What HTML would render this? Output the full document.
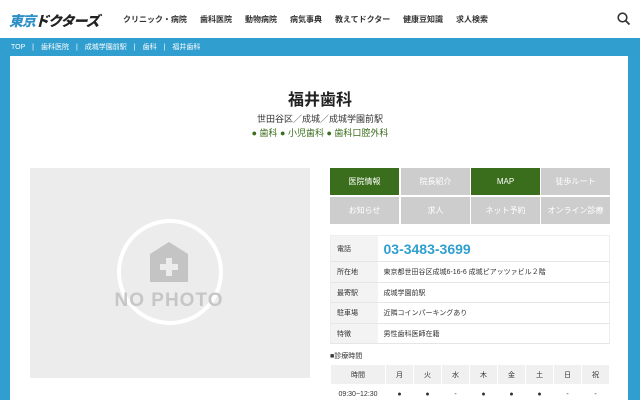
<!DOCTYPE html><html><head><meta charset="utf-8"><style>
*{margin:0;padding:0;box-sizing:border-box}
body{width:640px;height:400px;overflow:hidden;background:#fff;font-family:"Liberation Sans","Noto Sans CJK JP",sans-serif;position:relative;color:#333}
.a{position:absolute}
.nav span{position:absolute;top:14px;font-size:8px;font-weight:bold;color:#333}
.blue{left:0;top:38px;width:640px;height:362px;background:#309fcf}
.bc{top:42px;left:11px;font-size:7px;color:#fff}
.main{left:10px;top:56px;width:618px;height:344px;background:#fff}
.btn{position:absolute;width:69px;height:27px;font-size:8px;color:#fff;text-align:center;line-height:27px;background:#cdcdcd}
.g{background:#3b6e1c}
table{border-collapse:collapse;font-size:7px}
.info td{border-bottom:1px solid #e6e6e6;padding-left:6px}
.info td.l{background:#f3f3f3;width:47px}
.hr td{text-align:center;border:1px solid #fff;height:20px}
</style></head><body>
<div class="a" style="left:9px;top:11px;font-size:14px;font-weight:900;font-style:italic;letter-spacing:-1px"><span style="color:#2f8fc7">東京</span><span style="color:#222">ドクターズ</span></div>
<div class="nav"><span style="left:123px">クリニック・病院</span><span style="left:200px">歯科医院</span><span style="left:245px">動物病院</span><span style="left:290px">病気事典</span><span style="left:335px">教えてドクター</span><span style="left:403px">健康豆知識</span><span style="left:456px">求人検索</span></div>
<svg class="a" style="left:617px;top:12px" width="14" height="14"><circle cx="5.5" cy="5.5" r="4.3" fill="none" stroke="#333" stroke-width="1.6"/><line x1="8.7" y1="8.7" x2="12.5" y2="12.5" stroke="#333" stroke-width="1.8"/></svg>
<div class="a blue"></div>
<div class="a bc">TOP　|　歯科医院　|　成城学園前駅　|　歯科　|　福井歯科</div>
<div class="a main"></div>
<div class="a" style="left:0;width:640px;top:86px;text-align:center;font-size:16px;font-weight:bold;color:#222">福井歯科</div>
<div class="a" style="left:0;width:640px;top:112px;text-align:center;font-size:9px;color:#333">世田谷区／成城／成城学園前駅</div>
<div class="a" style="left:0;width:640px;top:126px;text-align:center;font-size:9px;color:#3b6e1c">● 歯科 ● 小児歯科 ● 歯科口腔外科</div>
<div class="a" style="left:30px;top:168px;width:280px;height:210px;background:#ececec"></div>
<svg class="a" style="left:30px;top:168px" width="280" height="210"><circle cx="140" cy="104" r="51" fill="none" stroke="#fff" stroke-width="4"/><path d="M120 103V86L139 74L158 86V114H120Z" fill="#c4c4c4"/><path d="M136 90h6v6h6v6h-6v6h-6v-6h-6v-6h6z" fill="#ececec"/><text x="139" y="138" text-anchor="middle" font-size="19" font-weight="bold" fill="#c6c6c6" font-family="Liberation Sans" letter-spacing="1">NO PHOTO</text></svg>
<div class="btn g" style="left:330px;top:168px">医院情報</div><div class="btn" style="left:401px;top:168px">院長紹介</div><div class="btn g" style="left:471px;top:168px">MAP</div><div class="btn" style="left:541px;top:168px">徒歩ルート</div>
<div class="btn" style="left:330px;top:197px">お知らせ</div><div class="btn" style="left:401px;top:197px">求人</div><div class="btn" style="left:471px;top:197px">ネット予約</div><div class="btn" style="left:541px;top:197px">オンライン診療</div>
<table class="a info" style="left:330px;top:235px;width:280px;border:1px solid #eee">
<tr style="height:26px"><td class="l">電話</td><td style="font-size:14px;font-weight:bold;color:#309fcf">03-3483-3699</td></tr>
<tr style="height:21px"><td class="l">所在地</td><td>東京都世田谷区成城6-16-6 成城ピアッツァビル２階</td></tr>
<tr style="height:20px"><td class="l">最寄駅</td><td>成城学園前駅</td></tr>
<tr style="height:21px"><td class="l">駐車場</td><td>近隣コインパーキングあり</td></tr>
<tr style="height:20px"><td class="l">特徴</td><td>男性歯科医師在籍</td></tr></table>
<div class="a" style="left:330px;top:351px;font-size:7px">■診療時間</div>
<table class="a hr" style="left:330px;top:364px;width:280px">
<tr style="background:#f0f0f0"><td style="width:55px">時間</td><td>月</td><td>火</td><td>水</td><td>木</td><td>金</td><td>土</td><td>日</td><td>祝</td></tr>
<tr><td>09:30~12:30</td><td>●</td><td>●</td><td>-</td><td>●</td><td>●</td><td>●</td><td>-</td><td>-</td></tr></table>
</body></html>
